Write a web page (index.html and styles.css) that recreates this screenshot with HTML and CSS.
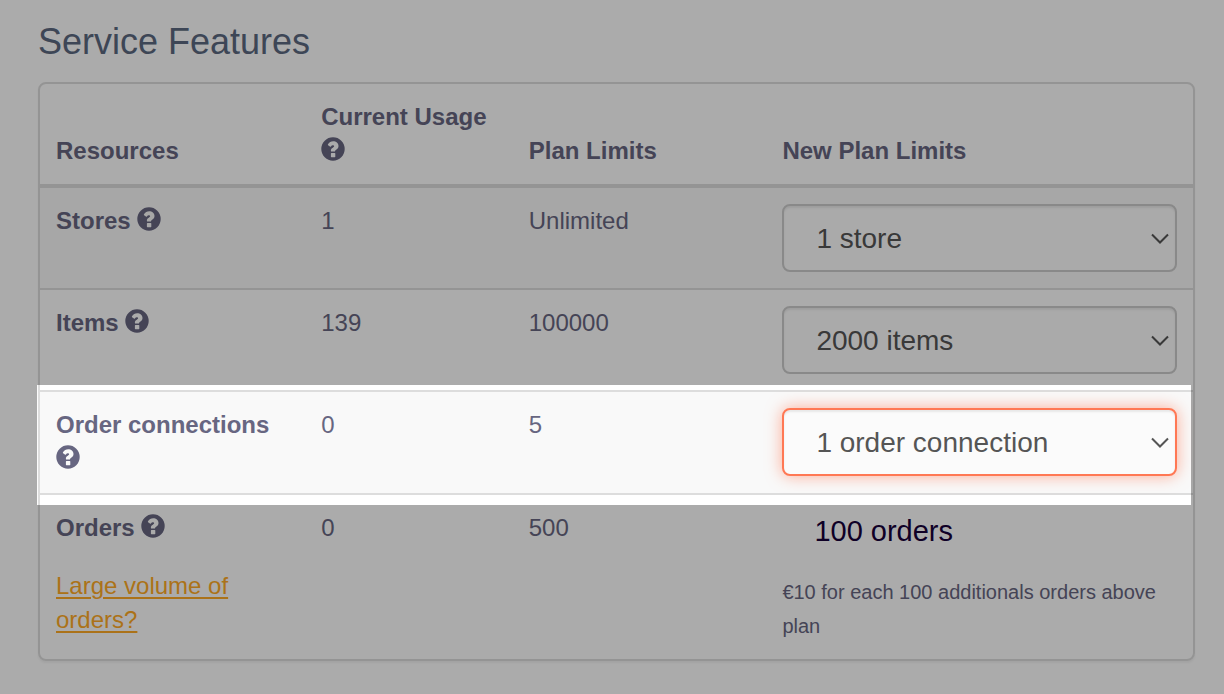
FILE: index.html
```
<!DOCTYPE html>
<html lang="en">
<head>
<meta charset="utf-8">
<meta name="viewport" content="width=device-width, initial-scale=1">
<title>Service Features</title>
<link rel="stylesheet" href="styles.css">
</head>
<body>
<svg class="sprite" aria-hidden="true">
  <symbol id="help" viewBox="0 0 24 24">
    <path fill="currentColor" fill-rule="evenodd" d="M12 .3a11.7 11.7 0 1 0 0 23.400A11.700 11.700 0 0 0 12 .3ZM10.400 16h3.400c.3 0 .5.200.5.500v3.200c0 .3-.2.500-.5.500h-3.400c-.3 0-.5-.2-.5-.5v-3.200c0-.3.200-.5.500-.5ZM7 7.300C8.200 5.200 9.900 4.300 12.200 4.300c2.900 0 5.300 1.900 5.300 4.700 0 3.500-3.400 3.700-3.400 5 0 .4-.2.600-.6.600h-3c-.4 0-.6-.2-.6-.6v-.5c0-2.500 3.200-2.900 3.200-4.200 0-.7-.6-1-1.300-1-.8 0-1.300.4-1.900 1.200-.3.400-.6.400-1 .1L7.100 8.200c-.3-.2-.3-.5-.1-.9Z"/>
  </symbol>
  <symbol id="chevron" viewBox="0 0 18 12">
    <path fill="none" stroke="currentColor" stroke-width="2" d="m1 1.500 8 8L17 1.500"/>
  </symbol>
</svg>
<main class="page">
  <h1 class="title">Service Features</h1>
  <div class="panel">
    <table class="features">
      <colgroup><col class="col-resource"><col class="col-usage"><col class="col-limit"><col class="col-new"></colgroup>
      <thead>
        <tr>
          <th scope="col">Resources</th>
          <th scope="col">Current Usage <svg class="help" role="img" aria-label="Help"><use href="#help"/></svg></th>
          <th scope="col">Plan Limits</th>
          <th scope="col">New Plan Limits</th>
        </tr>
      </thead>
      <tbody>
        <tr>
          <th scope="row"><label for="stores">Stores</label> <svg class="help" role="img" aria-label="Help"><use href="#help"/></svg></th>
          <td>1</td>
          <td>Unlimited</td>
          <td><div class="picker"><select id="stores"><option>1 store</option></select><svg class="chevron" aria-hidden="true"><use href="#chevron"/></svg></div></td>
        </tr>
        <tr>
          <th scope="row"><label for="items">Items</label> <svg class="help" role="img" aria-label="Help"><use href="#help"/></svg></th>
          <td>139</td>
          <td>100000</td>
          <td><div class="picker"><select id="items"><option>2000 items</option></select><svg class="chevron" aria-hidden="true"><use href="#chevron"/></svg></div></td>
        </tr>
        <tr class="highlighted">
          <th scope="row"><label for="connections">Order connections</label> <svg class="help" role="img" aria-label="Help"><use href="#help"/></svg><span class="spotlight"></span></th>
          <td>0</td>
          <td>5</td>
          <td><div class="picker active"><select id="connections"><option>1 order connection</option></select><svg class="chevron" aria-hidden="true"><use href="#chevron"/></svg></div></td>
        </tr>
        <tr>
          <th scope="row">Orders <svg class="help" role="img" aria-label="Help"><use href="#help"/></svg><a class="volume" href="#">Large volume of orders?</a></th>
          <td>0</td>
          <td>500</td>
          <td><p class="quota">100 orders</p><p class="note">€10 for each 100 additionals orders above plan</p></td>
        </tr>
      </tbody>
    </table>
  </div>
</main>
</body>
</html>
```
FILE: styles.css
```
* { box-sizing: border-box; }

body {
  margin: 0;
  background: #fff;
  color: #676681;
  font: 24px/34px "Liberation Sans", Arial, sans-serif;
}

.sprite { position: absolute; width: 0; height: 0; }

.page { padding: 20px 29px 33px 38px; }

.title {
  margin: 0 0 18px;
  color: #5c6980;
  font-size: 36px;
  font-weight: 400;
  line-height: 44px;
}

.panel {
  border: 2px solid #ddd;
  border-radius: 8px;
  box-shadow: 0 2px 2px rgba(0, 0, 0, .05);
}

.features {
  width: 100%;
  table-layout: fixed;
  border-spacing: 0;
}

.col-resource { width: 23%; }
.col-usage { width: 18%; }
.col-limit { width: 22%; }
.col-new { width: 37%; }

th, td {
  padding: 16px;
  text-align: left;
  vertical-align: top;
}

thead th {
  border-bottom: 4px solid #ddd;
  vertical-align: bottom;
}

tbody tr:nth-child(odd) { background: #f9f9f9; }
tbody tr + tr > * { border-top: 2px solid #ddd; }

.help {
  width: 24px;
  height: 24px;
  vertical-align: -2px;
}

.picker { position: relative; }

.picker select {
  display: block;
  width: 100%;
  height: 68px;
  padding: 0 32px;
  appearance: none;
  border: 2px solid #ccc;
  border-radius: 8px;
  outline: 0;
  background: #fefefe;
  box-shadow: inset 0 2px 2px rgba(0, 0, 0, .08);
  color: #555;
  font: 28px "Liberation Sans", Arial, sans-serif;
}

.picker.active select {
  border-color: #ff7854;
  background: #fbfbfb;
  box-shadow: inset 0 2px 2px rgba(0, 0, 0, .08), 0 0 16px rgba(255, 120, 84, .6);
}

.chevron {
  position: absolute;
  top: 50%;
  right: 8px;
  width: 18px;
  height: 12px;
  margin-top: -5px;
  color: #555;
  pointer-events: none;
}

.highlighted { position: relative; }
.highlighted > * { padding-bottom: 17px; }

/* Dims everything on the page outside the highlighted row */
.spotlight {
  position: absolute;
  inset: -5px 2px -12px -3px;
  box-shadow: 0 0 0 200vmax rgba(0, 0, 0, .33);
  pointer-events: none;
}

.volume {
  display: block;
  margin-top: 24px;
  color: #ffab26;
  font-weight: 400;
  text-decoration-thickness: 2px;
  text-underline-offset: 3px;
}

.quota {
  margin: 0 0 24px;
  padding-left: 32px;
  color: #17003a;
  font-size: 29px;
  line-height: 40px;
}

.note { margin: 0; font-size: 20px; }
```
